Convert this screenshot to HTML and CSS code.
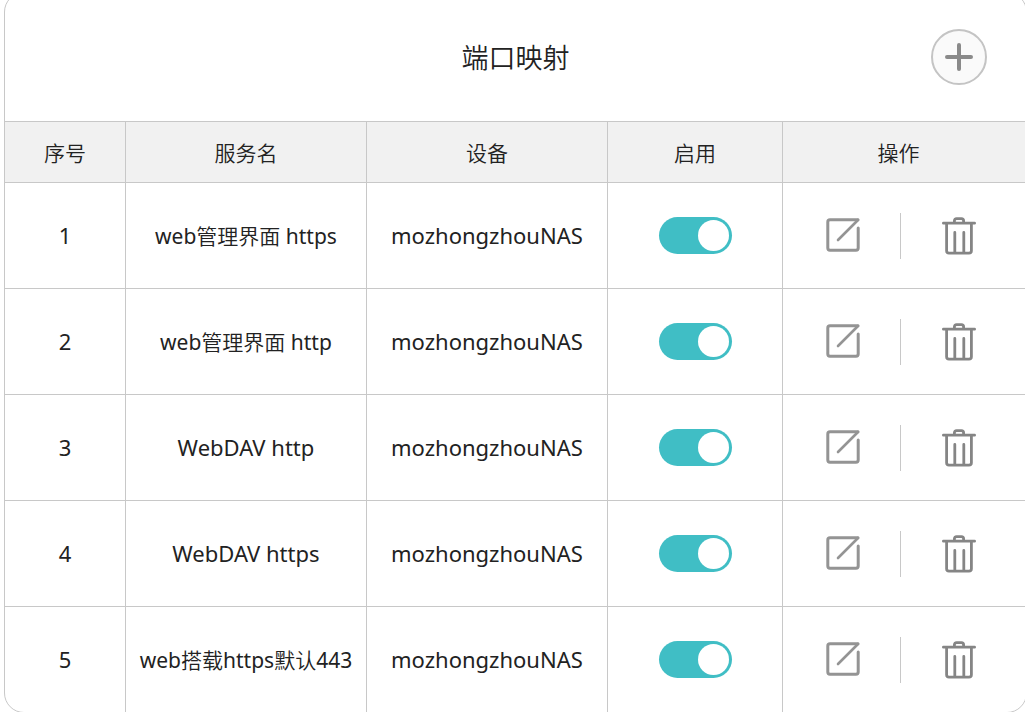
FILE: index.html
```html
<!DOCTYPE html>
<html lang="zh-CN">
<head>
<meta charset="utf-8">
<title>端口映射</title>
<link rel="stylesheet" href="styles.css">
</head>
<body>
<svg class="sprite" aria-hidden="true">
  <symbol id="edit" viewBox="0 0 34 34">
    <path d="M32 1.8H4Q1.8 1.8 1.8 4V30Q1.8 32.2 4 32.2H30Q32.2 32.2 32.2 30V10" fill="none" stroke="#949494" stroke-width="3" stroke-linecap="round"/>
    <path d="M32 2L12 22" fill="none" stroke="#949494" stroke-width="2.6" stroke-linecap="round"/>
  </symbol>
  <symbol id="trash" viewBox="0 0 34 38">
    <path d="M1.4 6.2H32.6M4.6 6.5V33.8Q4.6 36.2 7 36.2H27Q29.4 36.2 29.4 33.8V6.5" fill="none" stroke="#858585" stroke-width="2.8" stroke-linecap="round"/>
    <path d="M12.4 5.5V3.8Q12.4 1.6 14.6 1.6H19.4Q21.6 1.6 21.6 3.8V5.5" fill="none" stroke="#858585" stroke-width="2.8"/>
    <path d="M12.8 15.4V35M21.8 15.4V35" fill="none" stroke="#858585" stroke-width="2.8" stroke-linecap="round"/>
  </symbol>
</svg>
<main class="card">
  <header class="card-header">
    <h1 class="title">端口映射</h1>
    <button class="add" type="button" aria-label="添加">
      <svg viewBox="0 0 28 28" aria-hidden="true"><path d="M14 2V26M2 14H26" stroke="#8a8a8a" stroke-width="4" stroke-linecap="round"/></svg>
    </button>
  </header>
  <table class="rules">
    <colgroup><col class="col-index"><col class="col-name"><col class="col-name"><col class="col-enable"><col></colgroup>
    <thead>
      <tr><th>序号</th><th>服务名</th><th>设备</th><th>启用</th><th class="ops">操作</th></tr>
    </thead>
    <tbody>
      <tr><td class="latin">1</td><td>web管理界面 https</td><td class="latin">mozhongzhouNAS</td>
        <td class="enable"><input class="toggle" type="checkbox" role="switch" aria-label="启用 1" checked></td>
        <td class="ops"><div class="actions"><button type="button" aria-label="编辑 1"><svg class="edit"><use href="#edit"/></svg></button><button type="button" aria-label="删除 1"><svg class="trash"><use href="#trash"/></svg></button></div></td></tr>
      <tr><td class="latin">2</td><td>web管理界面 http</td><td class="latin">mozhongzhouNAS</td>
        <td class="enable"><input class="toggle" type="checkbox" role="switch" aria-label="启用 2" checked></td>
        <td class="ops"><div class="actions"><button type="button" aria-label="编辑 2"><svg class="edit"><use href="#edit"/></svg></button><button type="button" aria-label="删除 2"><svg class="trash"><use href="#trash"/></svg></button></div></td></tr>
      <tr><td class="latin">3</td><td class="latin">WebDAV http</td><td class="latin">mozhongzhouNAS</td>
        <td class="enable"><input class="toggle" type="checkbox" role="switch" aria-label="启用 3" checked></td>
        <td class="ops"><div class="actions"><button type="button" aria-label="编辑 3"><svg class="edit"><use href="#edit"/></svg></button><button type="button" aria-label="删除 3"><svg class="trash"><use href="#trash"/></svg></button></div></td></tr>
      <tr><td class="latin">4</td><td class="latin">WebDAV https</td><td class="latin">mozhongzhouNAS</td>
        <td class="enable"><input class="toggle" type="checkbox" role="switch" aria-label="启用 4" checked></td>
        <td class="ops"><div class="actions"><button type="button" aria-label="编辑 4"><svg class="edit"><use href="#edit"/></svg></button><button type="button" aria-label="删除 4"><svg class="trash"><use href="#trash"/></svg></button></div></td></tr>
      <tr><td class="latin">5</td><td>web搭载https默认443</td><td class="latin">mozhongzhouNAS</td>
        <td class="enable"><input class="toggle" type="checkbox" role="switch" aria-label="启用 5" checked></td>
        <td class="ops"><div class="actions"><button type="button" aria-label="编辑 5"><svg class="edit"><use href="#edit"/></svg></button><button type="button" aria-label="删除 5"><svg class="trash"><use href="#trash"/></svg></button></div></td></tr>
    </tbody>
  </table>
</main>
</body>
</html>
```
FILE: styles.css
```css
* { box-sizing: border-box; }
html { overflow: hidden; }
body {
  margin: 0;
  overflow: hidden;
  background: #fff;
  color: #222;
  font: 21px/32px "Noto Sans", "Noto Sans CJK SC DemiLight", "Noto Sans CJK SC", sans-serif;
}
.sprite { display: none; }
.card {
  margin: -8px -2px 0 4px;
  border: 1px solid #c8c8c8;
  border-radius: 20px;
  overflow: hidden;
}
.card-header {
  display: grid;
  grid-template-columns: 1fr auto 1fr;
  align-items: center;
  padding: 36px 39px;
}
.title {
  grid-column: 2;
  margin: 0;
  padding-top: 2px;
  font-size: 27px;
  line-height: 40px;
  font-weight: 400;
}
.add {
  justify-self: end;
  display: grid;
  place-items: center;
  width: 56px;
  height: 56px;
  padding: 0;
  border: 2px solid #c4c4c4;
  border-radius: 50%;
  background: #fafafa;
}
.add svg { width: 28px; height: 28px; }
.rules {
  width: 100%;
  table-layout: fixed;
  border-collapse: separate;
  border-spacing: 0;
  text-align: center;
}
.col-index { width: 11.85%; }
.col-name { width: 23.6%; }
.col-enable { width: 17.15%; }
th, td {
  padding: 0;
  border-top: 1px solid #c8c8c8;
  border-right: 1px solid #c8c8c8;
  font-weight: 400;
  white-space: nowrap;
}
th { height: 61px; padding-top: 2px; background: #f1f1f1; }
td { height: 106px; }
.latin { padding-bottom: 2px; font-size: 22px; }
.enable { padding-left: 2px; }
.ops { padding-right: 9px; border-right: 0; }
th.ops { padding-right: 12px; }
.toggle {
  appearance: none;
  display: flex;
  align-items: center;
  justify-content: flex-end;
  width: 73px;
  height: 37px;
  margin: 0 auto;
  padding: 3px;
  border-radius: 19px;
  background: #40bec5;
}
.toggle::before {
  content: "";
  width: 31px;
  height: 31px;
  border-radius: 50%;
  background: #fff;
}
.toggle:not(:checked) { justify-content: flex-start; background: #c8c8c8; }
.actions {
  display: grid;
  grid-template-columns: 1fr 1fr;
}
.actions button {
  display: grid;
  place-items: center;
  height: 46px;
  padding: 0;
  border: 0;
  background: none;
}
.actions button:first-child { padding: 0 0 2px 4px; }
.actions button + button { border-left: 1px solid #c8c8c8; }
.edit { width: 34px; height: 34px; }
.trash { width: 34px; height: 38px; }
```
